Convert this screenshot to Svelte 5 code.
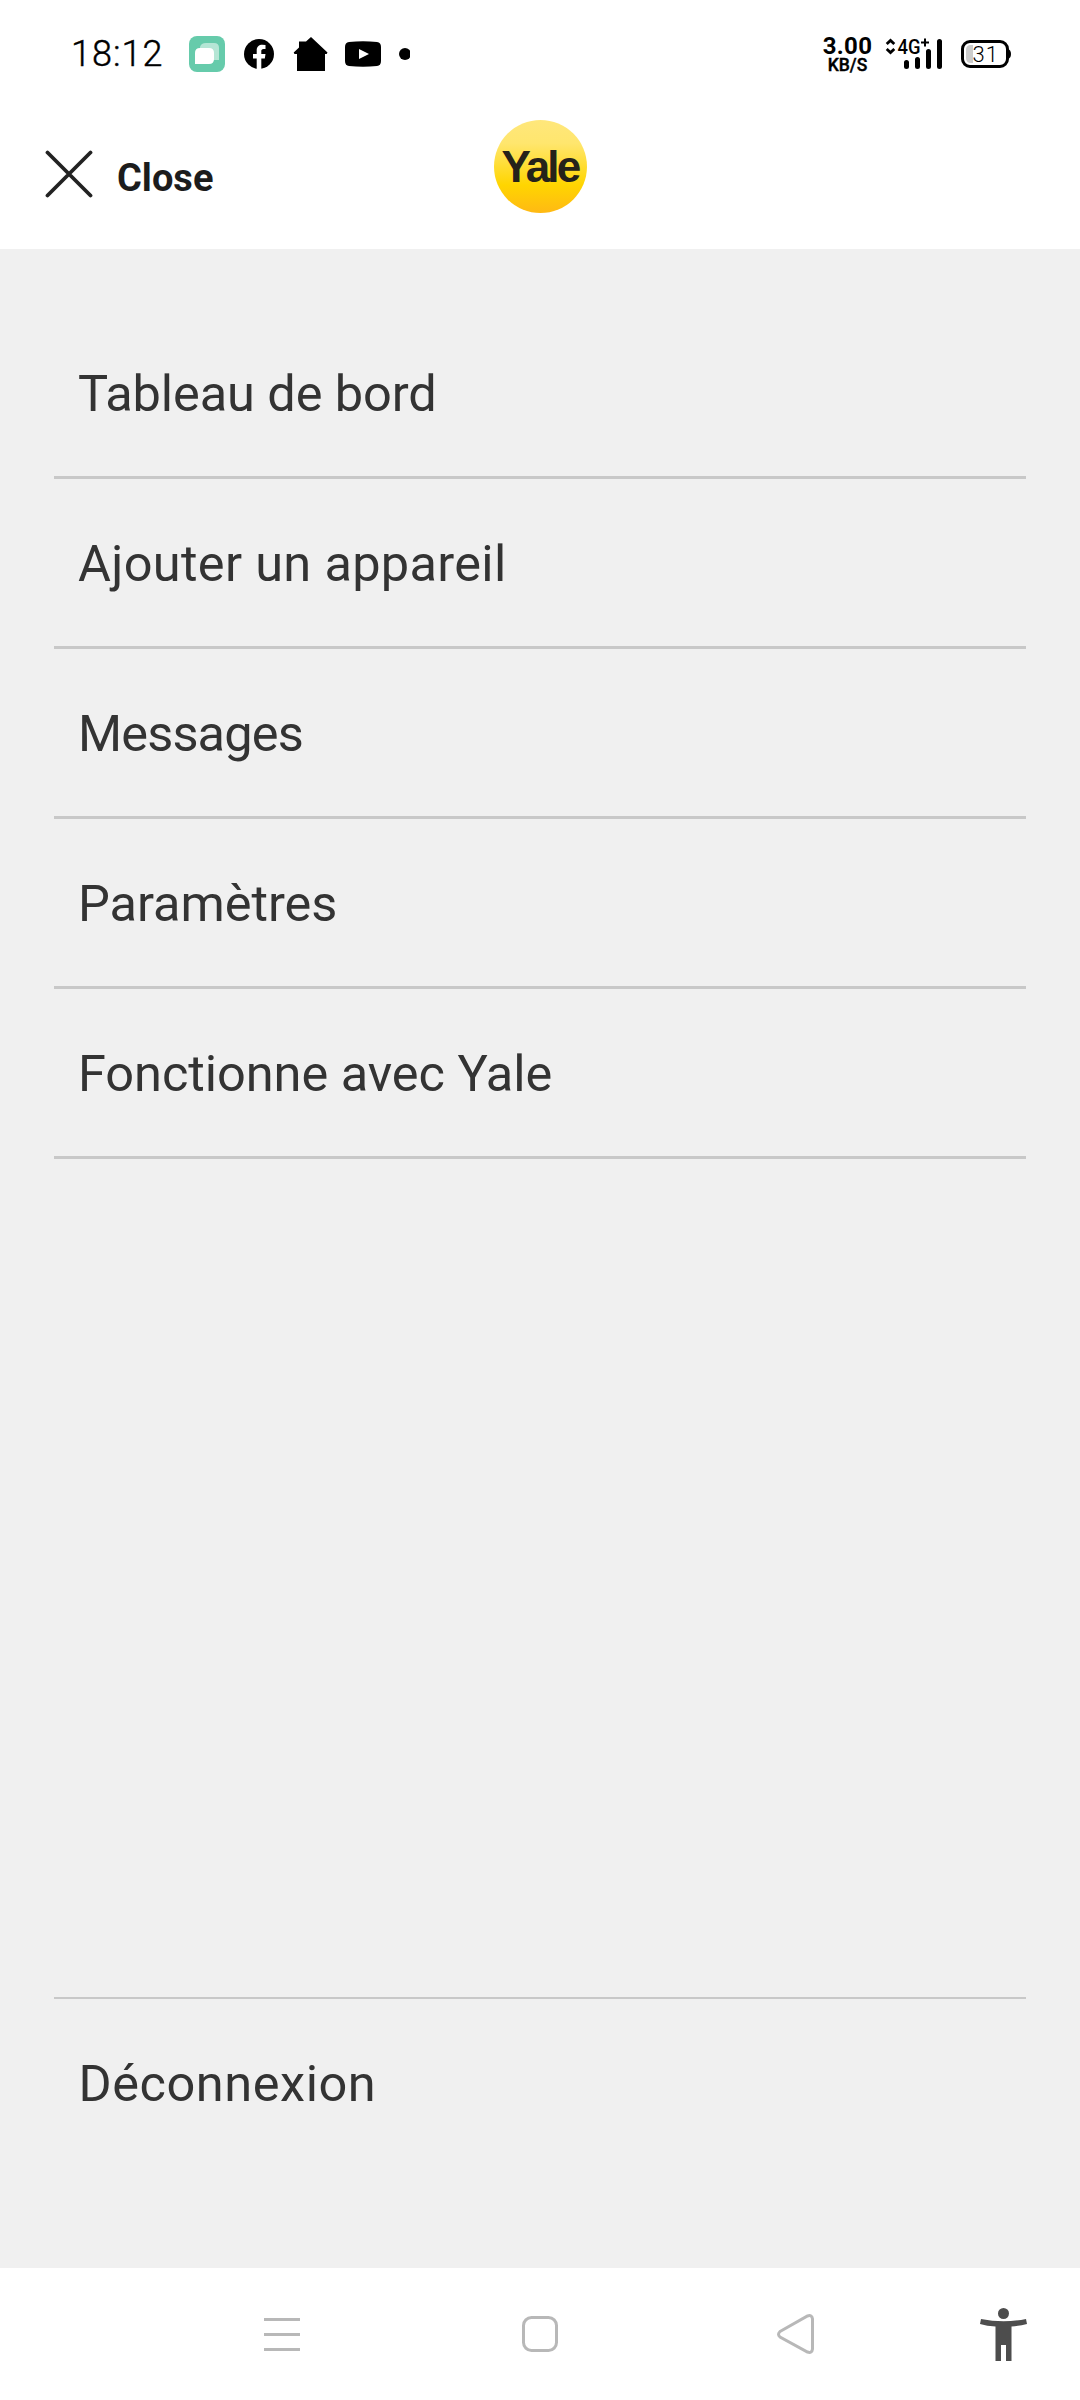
<script>
  const items = [
    { label: 'Tableau de bord', spacing: -0.1 },
    { label: 'Ajouter un appareil', spacing: 0.32 },
    { label: 'Messages', spacing: -0.85 },
    { label: 'Paramètres', spacing: -0.05 },
    { label: 'Fonctionne avec Yale', spacing: -0.05 }
  ];
</script>

<div class="screen">
  <div class="status">
    <span class="time">18:12</span>
    <svg class="notifs" width="222" height="60" viewBox="188 25 222 60">
      <rect x="189" y="36" width="36" height="36" rx="8" fill="#66cbab" />
      <path d="M200 48V47q1-4 6-4h8q5 0 5 5v12h-6z" fill="#b5e6d5" />
      <path d="M195 64V53q0-5 5-5h9q5 0 5 5v6q0 5-5 5z" fill="#fff" />
      <circle cx="259" cy="54" r="15" fill="#000" />
      <path d="M256.700 69V58.500H253V54h3.700v-3.500c0-3.800 2.300-5.700 5.600-5.700l3.200.3v3.800h-1.900c-1.800 0-2.300 1-2.300 2.200V54h4.200l-.7 4.500h-3.500V69z" fill="#fff" />
      <path d="M311 37l16.500 15.500-.8 1.500H325v17h-28V54h-2.500l-.8-1.500 5.300-5V41.500h7z" fill="#000" />
      <path d="M349 42q14-1.500 28 0 4 .5 4 5v14q0 4.500-4 5-14 1.500-28 0-4-.5-4-5V47q0-4.500 4-5z" fill="#000" />
      <path d="M359 49v10l10-5z" fill="#fff" />
      <circle cx="405" cy="54" r="6" fill="#000" />
    </svg>
    <div class="rate"><span class="num">3.00</span><span class="unit">KB/S</span></div>
    <svg class="signal" width="150" height="60" viewBox="880 25 150 60">
      <path d="M886.700 44l3.800-3.500 3.800 3.500M886.700 49l3.800 3.500 3.800-3.500" fill="none" stroke="#000" stroke-width="2.800" />
      <text x="897.500" y="54" class="net" textLength="23" lengthAdjust="spacingAndGlyphs">4G</text>
      <path d="M921 42.500h8M925 38.500v8" stroke="#000" stroke-width="2" />
      <path d="M906.500 62.500v4M917.500 59.500v7M928.500 51.500v15M939.500 41.500v25" stroke="#000" stroke-width="5" stroke-linecap="round" />
      <path d="M973 45h-2q-5 0-5 5v8q0 5 5 5h2z" fill="#ccc" />
      <rect x="962.500" y="41.500" width="45" height="25" rx="7.500" fill="none" stroke="#000" stroke-width="3" />
      <path d="M1008 49q3 1 3 5t-3 5z" fill="#000" />
      <text x="972.500" y="62" class="batt">31</text>
    </svg>
  </div>

  <header>
    <svg class="x" width="48" height="48" viewBox="0 0 48 48"><path d="M2.500 2.500l43 43M45.500 2.500l-43 43" stroke="#222" stroke-width="3.800" stroke-linecap="round" /></svg>
    <span class="close">Close</span>
    <div class="logo"><span>Yale</span></div>
  </header>

  <main>
    <nav>
      {#each items as item}
        <div class="item"><span style="letter-spacing: {item.spacing}px">{item.label}</span></div>
      {/each}
    </nav>
    <div class="logout"><span>Déconnexion</span></div>
  </main>

  <svg class="bar" width="1080" height="132" viewBox="0 2268 1080 132">
    <path d="M264 2319.500h36M264 2334.500h36M264 2349.500h36" stroke="#b8b8b8" stroke-width="3" />
    <rect x="523.500" y="2317.500" width="33" height="33" rx="8" fill="none" stroke="#b8b8b8" stroke-width="3" />
    <path d="M780 2331.500L807.500 2316q4.500-1.500 5 3v30q-.5 4.500-5 3L780 2337q-3-2.700 0-5.500z" fill="none" stroke="#b8b8b8" stroke-width="3" />
    <circle cx="1003.500" cy="2313.500" r="5.500" fill="#4d4d4d" />
    <path d="M981 2319q22.500 4.500 45 0l1 5q-7 2-15.500 2.500V2361h-5.500v-16h-5v16h-5.500v-34.500Q987 2326 980 2324z" fill="#4d4d4d" />
  </svg>
</div>

<style>
  :global(body) { margin: 0; background: #fff; }
  .screen { width: 1080px; height: 2400px; display: flex; flex-direction: column; background: #fff; font-family: Roboto, "Liberation Sans", sans-serif; overflow: hidden; }
  .status { height: 105px; display: flex; align-items: flex-start; padding: 25px 50px 0 71px; box-sizing: border-box; }
  .time { width: 117px; font-size: 36px; line-height: 59px; letter-spacing: 1px; font-weight: 300; -webkit-text-stroke: 0.4px #000; color: #000; white-space: nowrap; }
  .notifs { flex: none; }
  .rate { margin-left: auto; margin-right: 4px; width: 57px; display: flex; flex-direction: column; align-items: center; font-weight: 700; color: #000; }
  .num { font-size: 24px; line-height: 22px; margin-top: 10px; letter-spacing: 0.3px; }
  .unit { font-size: 17.500px; line-height: 16px; font-weight: 500; -webkit-text-stroke: 0.4px #000; }
  .signal { flex: none; }
  .net { font: 500 20px Roboto, sans-serif; }
  .batt { font: 300 22px Roboto, sans-serif; letter-spacing: 1px; }
  header { height: 144px; display: grid; grid-template-columns: 48px 377px 93px; padding-left: 45px; align-items: start; }
  .x { margin-top: 45px; }
  .close { padding-left: 24px; margin-top: 51px; font-size: 38px; line-height: 44px; font-weight: 700; color: #1c1c1c; }
  .logo { margin: 15px 0 0 24px; width: 93px; height: 93px; border-radius: 50%; background: linear-gradient(#ffe77b 0%, #ffe66e 25%, #ffd500 70%, #ffb914 100%); display: flex; justify-content: center; align-items: center; font: 700 44px/93px "Liberation Sans", sans-serif; letter-spacing: -2.8px; color: #25221a; }
  .logo span { padding-right: 1px; }
  main { height: 2019px; background: #f0f0f0; display: flex; flex-direction: column; justify-content: space-between; box-sizing: border-box; padding: 60px 54px 0; }
  .item { height: 170px; box-sizing: border-box; border-bottom: 3px solid #c8c8c8; padding: 55px 0 0 24px; font-size: 50.500px; line-height: 60px; color: #333; white-space: nowrap; }
  .logout { height: 271px; box-sizing: border-box; border-top: 2px solid #c8c8c8; padding: 55px 0 0 24.500px; font-size: 50.500px; line-height: 60px; letter-spacing: 0.55px; color: #333; }
  .bar { display: block; flex: none; }
</style>
